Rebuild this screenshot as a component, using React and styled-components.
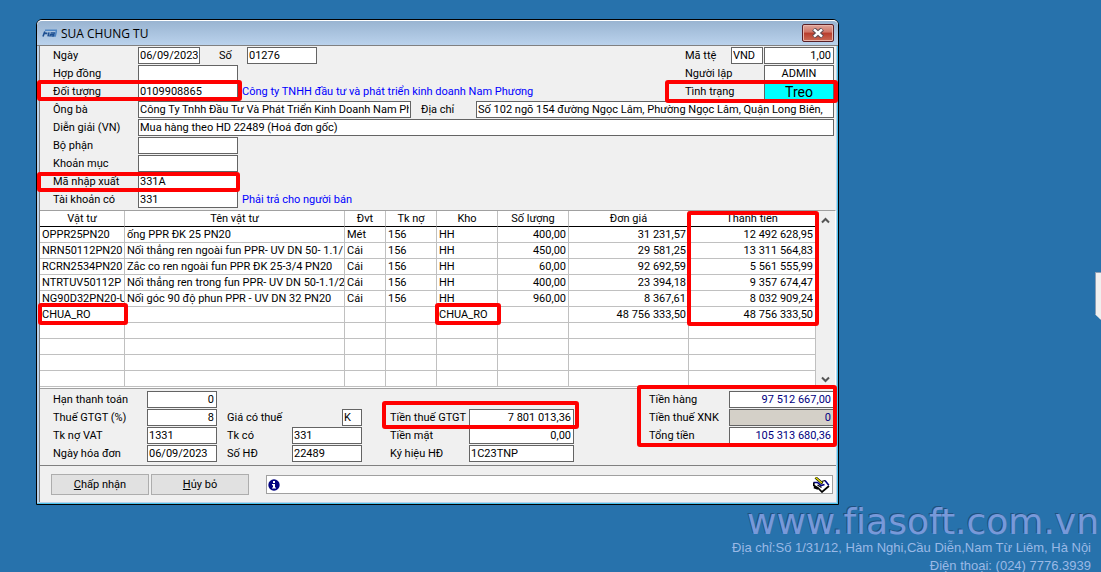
import React from 'react'
import styled, { createGlobalStyle, css } from 'styled-components'

const colors = {
	desktop: '#2772ac',
	face: '#f0f0f0',
	border: '#646464',
	grid: '#c0c0c0',
	link: '#0000ff',
	total: '#000080',
	mark: '#ff0000',
}

// data
const columns = [
	{ title: 'Vật tư', width: 85 },
	{ title: 'Tên vật tư' },
	{ title: 'Đvt', width: 41 },
	{ title: 'Tk nợ', width: 51 },
	{ title: 'Kho', width: 61 },
	{ title: 'Số lượng', width: 71, right: true },
	{ title: 'Đơn giá', width: 120, right: true },
	{ title: 'Thành tiền', width: 127, right: true },
]

const items = [
	['OPPR25PN20', 'ống PPR ĐK 25 PN20', 'Mét', '156', 'HH', '400,00', '31 231,57', '12 492 628,95'],
	['NRN50112PN20', 'Nối thẳng ren ngoài fun PPR- UV DN 50- 1.1/', 'Cái', '156', 'HH', '450,00', '29 581,25', '13 311 564,83'],
	['RCRN2534PN20', 'Zắc co ren ngoài fun PPR ĐK 25-3/4 PN20', 'Cái', '156', 'HH', '60,00', '92 692,59', '5 561 555,99'],
	['NTRTUV50112P', 'Nối thẳng ren trong fun PPR- UV DN 50-1.1/2', 'Cái', '156', 'HH', '400,00', '23 394,18', '9 357 674,47'],
	['NG90D32PN20-U', 'Nối góc 90 độ phun PPR - UV DN 32 PN20', 'Cái', '156', 'HH', '960,00', '8 367,61', '8 032 909,24'],
	['CHUA_RO', '', '', '', 'CHUA_RO', '', '48 756 333,50', '48 756 333,50'],
	...Array(4).fill(Array(8).fill('')),
]

const Field = ({ id, label, labelWidth, value, mark, ...rest }) => (
	<Pair $fill={rest.$fill}>
		<Label htmlFor={id} $width={labelWidth}>
			{label}
		</Label>
		<TextBox id={id} defaultValue={value} {...rest} />
		{mark && <Mark $inset={mark} />}
	</Pair>
)

const LogoIcon = () => (
	<svg width='15' height='9' viewBox='0 0 15 9' aria-hidden='true'>
		<path d='M3 1.2H14.6L13.2 7H10' fill='none' stroke='#4f86c4' strokeWidth='1.6' />
		<path d='M2.8 2.4L1 7.4M2.2 4.4H5.4M7 3.4L6 7.4' fill='none' stroke='#1d4f91' strokeWidth='1.6' />
		<path d='M8.6 3.8H12.4L11.6 6.8H7.8L8.3 5.3H12' fill='none' stroke='#1d4f91' strokeWidth='1.2' />
	</svg>
)

const CloseIcon = () => (
	<svg width='12' height='10' viewBox='0 0 12 10' aria-hidden='true'>
		<path d='M1.6 1L10.4 9M10.4 1L1.6 9' stroke='#5b4a52' strokeWidth='4.4' />
		<path d='M2 1.4L10 8.6M10 1.4L2 8.6' stroke='#fff' strokeWidth='2.6' />
	</svg>
)

const InfoIcon = () => (
	<svg width='12' height='12' viewBox='0 0 12 12' aria-hidden='true'>
		<circle cx='6' cy='6' r='5.7' fill='#000080' />
		<path d='M5 2H7V4H5ZM4 5H7V8.4H8V9.6H4V8.4H5V6.2H4Z' fill='#fff' />
	</svg>
)

const NoteIcon = () => (
	<svg width='17' height='16' viewBox='0 0 17 16' aria-hidden='true'>
		<path d='M5 7L12 3.5L16 9L9 15L3.5 11Z' fill='#fff' />
		<path d='M0.5 5.5H4.5L8 8.5L11.5 7.5M12 3.5L15.8 8.2' fill='none' stroke='#000080' strokeWidth='1.6' />
		<path d='M0.8 5.5V8.5L5 11L9 15L16 9M0.8 10.5L5 12' fill='none' stroke='#000' strokeWidth='1.7' />
		<path d='M8.5 4.5L12 3.5M4.5 8L8.5 10.5' fill='none' stroke='#000' strokeWidth='1.2' />
		<path d='M2.5 0.5L9.5 6.5' stroke='#000' strokeWidth='2.6' />
		<path d='M2.5 0.5L9 6' stroke='#e6e000' strokeWidth='1.4' />
	</svg>
)

const Chevron = ({ down }) => (
	<svg width='9' height='7' viewBox='0 0 9 7' aria-hidden='true'>
		<path d={down ? 'M1 1.5L4.5 5L8 1.5' : 'M1 5.5L4.5 2L8 5.5'} fill='none' stroke='#555' strokeWidth='2' />
	</svg>
)

const App = () => (
	<>
		<GlobalStyle />
		<Desktop>
			<Window aria-label='SUA CHUNG TU'>
				<TitleBar>
					<LogoIcon />
					<Title>SUA CHUNG TU</Title>
					<CloseButton aria-label='Close'>
						<CloseIcon />
					</CloseButton>
				</TitleBar>

				<Body>
					<Header>
						<Row>
							<Field id='date' label='Ngày' value='06/09/2023' $width={62} />
							<Gap $width={19} />
							<Field id='number' label='Số' labelWidth={28} value='01276' $width={70} />
							<Side>
								<Label htmlFor='currency' $width={45}>
									Mã ttệ
								</Label>
								<TextBox id='currency' defaultValue='VND' $width={32} />
								<TextBox aria-label='Tỷ giá' defaultValue='1,00' $width={70} $align='right' />
							</Side>
						</Row>
						<Row>
							<Field id='contract' label='Hợp đồng' value='' $width={100} />
							<Side>
								<Label htmlFor='author' $width={78}>
									Người lập
								</Label>
								<TextBox id='author' defaultValue='ADMIN' $width={70} $align='center' />
							</Side>
						</Row>
						<Row>
							<Field id='partner' label='Đối tượng' value='0109908865' $width={100} mark='-3px -4px -1px -16px' />
							<Hint>Công ty TNHH đầu tư và phát triển kinh doanh Nam Phương</Hint>
							<Side>
								<Label htmlFor='status' $width={78}>
									Tình trạng
								</Label>
								<StatusBox id='status' defaultValue='Treo' $width={70} $align='center' />
								<Mark $inset='-3px -4px -3px -20px' />
							</Side>
						</Row>
						<Row>
							<Field id='person' label='Ông bà' value='Công Ty Tnhh Đầu Tư Và Phát Triển Kinh Doanh Nam Phương' $width={273} />
							<Gap $width={10} />
							<Field id='address' label='Địa chỉ' labelWidth={55} value='Số 102 ngõ 154 đường Ngọc Lâm, Phường Ngọc Lâm, Quận Long Biên,' $fill />
						</Row>
						<Row>
							<Field id='note' label='Diễn giải (VN)' value='Mua hàng theo HD 22489 (Hoá đơn gốc)' $fill />
						</Row>
						<Row>
							<Field id='department' label='Bộ phận' value='' $width={100} />
						</Row>
						<Row>
							<Field id='category' label='Khoản mục' value='' $width={100} />
						</Row>
						<Row>
							<Field id='code' label='Mã nhập xuất' value='331A' $width={100} mark='-1px -2px -2px -16px' />
						</Row>
						<Row>
							<Field id='credit' label='Tài khoản có' value='331' $width={100} />
							<Hint>Phải trả cho người bán</Hint>
						</Row>
					</Header>

					<GridArea>
						<Table>
							<colgroup>
								{columns.map((column) => (
									<Col key={column.title} $width={column.width} />
								))}
							</colgroup>
							<thead>
								<tr>
									{columns.map((column, i) => (
										<HeadCell key={column.title}>
											{column.title}
											{i === 7 && <Mark $inset='0 -4px auto -2px' $height={115} />}
										</HeadCell>
									))}
								</tr>
							</thead>
							<tbody>
								{items.map((item, row) => (
									<tr key={row}>
										{item.map((value, i) => (
											<Cell key={i} $right={columns[i].right}>
												<CellText>{value}</CellText>
												{value === 'CHUA_RO' && <Mark $inset='-4px -4px -3px -2px' />}
											</Cell>
										))}
									</tr>
								))}
							</tbody>
						</Table>
						<ScrollBar>
							<Chevron />
							<Chevron down />
						</ScrollBar>
					</GridArea>

					<Footer>
						<Group>
							<Field id='term' label='Hạn thanh toán' labelWidth={94} value='0' $width={70} $align='right' />
							<Field id='vat' label='Thuế GTGT (%)' labelWidth={94} value='8' $width={70} $align='right' />
							<Field id='vatDebit' label='Tk nợ VAT' labelWidth={94} value='1331' $width={70} />
							<Field id='invoiceDate' label='Ngày hóa đơn' labelWidth={94} value='06/09/2023' $width={70} />
						</Group>
						<Gap $width={10} />
						<Group>
							<Field id='taxed' label='Giá có thuế' labelWidth={115} value='K' $width={20} />
							<Field id='vatCredit' label='Tk có' labelWidth={65} value='331' $width={70} />
							<Field id='invoice' label='Số HĐ' labelWidth={65} value='22489' $width={70} />
						</Group>
						<Gap $width={28} />
						<Group>
							<Field id='tax' label='Tiền thuế GTGT' labelWidth={79} value='7 801 013,36' $width={105} $align='right' mark='-8px -5px -3px -8px' />
							<Field id='cash' label='Tiền mặt' labelWidth={79} value='0,00' $width={105} $align='right' />
							<Field id='symbol' label='Ký hiệu HĐ' labelWidth={79} value='1C23TNP' $width={105} />
						</Group>
						<Totals>
							<Field id='goods' label='Tiền hàng' labelWidth={80} value='97 512 667,00' $width={105} $align='right' $total />
							<Field id='importTax' label='Tiền thuế XNK' labelWidth={80} value='0' $width={105} $align='right' $total $locked readOnly />
							<Field id='sum' label='Tổng tiền' labelWidth={80} value='105 313 680,36' $width={105} $align='right' $total />
							<Mark $inset='-6px -3px -3px -12px' />
						</Totals>
					</Footer>

					<Actions>
						<Button>
							<u>C</u>hấp nhận
						</Button>
						<Button>
							<u>H</u>ủy bỏ
						</Button>
						<Message>
							<InfoIcon />
							<MessageInput aria-label='Thông báo' />
							<NoteIcon />
						</Message>
					</Actions>
				</Body>
			</Window>

			<Contact>
				<Site>www.fiasoft.com.vn</Site>
				<p>Địa chỉ:Số 1/31/12, Hàm Nghi,Cầu Diễn,Nam Từ Liêm, Hà Nội</p>
				<p>Điện thoại: (024) 7776.3939</p>
			</Contact>
			<EdgeTab />
		</Desktop>
	</>
)

const GlobalStyle = createGlobalStyle`
	* {
		box-sizing: border-box;
	}

	body {
		margin: 0;
		background: ${colors.desktop};
		font-family: Roboto, 'Liberation Sans', sans-serif;
		font-size: 11px;
		line-height: 18px;
		color: #000;
	}

	input, button {
		font: inherit;
		color: inherit;
	}

	p {
		margin: 0;
	}
`

const Desktop = styled.main`
	position: relative;
	height: 100vh;
	min-height: 572px;
	padding-top: 19px;
	overflow: hidden;
	background: ${colors.desktop};
`

const Window = styled.section`
	margin: 0 262px 0 36px;
	padding: 0 2px 2px;
	border: 1px solid #000;
	border-radius: 6px 6px 0 0;
	background: #b9d1ea;
	box-shadow: inset 0 1px #fff, inset -1px -1px #4cc4ee;
`

const TitleBar = styled.header`
	display: flex;
	align-items: center;
	gap: 4px;
	height: 26px;
	margin: 0 -2px;
	padding: 0 4px 0 5px;
	border-radius: 5px 5px 0 0;
	border-top: 1px solid #fff;
	border-bottom: 1px solid #808080;
	background: linear-gradient(#99b4d1, #bad2ec);
`

const Title = styled.h1`
	flex: 1;
	margin: 0;
	font: 12px 'Open Sans', 'Noto Sans', sans-serif;
`

const CloseButton = styled.button`
	display: grid;
	place-items: center;
	width: 32px;
	height: 18px;
	padding: 0;
	border: 1px solid #5a1f26;
	border-radius: 2px;
	background: linear-gradient(#e0a59a, #cf7365 45%, #b83c2c 50%, #cc6a55);
	box-shadow: inset 0 0 0 1px #e8b5ab;
`

const Body = styled.div`
	border-left: 1px solid #808080;
	background: ${colors.face};
`

const Header = styled.div`
	display: flex;
	flex-direction: column;
	gap: 1px;
	padding: 1px 2px 2px 13px;
`

const Row = styled.div`
	display: flex;
	height: 17px;
`

const Pair = styled.div`
	position: relative;
	display: flex;
	justify-content: space-between;
	height: 17px;
	${({ $fill }) => $fill && 'flex: 1;'}
`

const Side = styled.div`
	position: relative;
	display: flex;
	gap: 1px;
	margin-left: auto;
`

const Label = styled.label`
	flex: none;
	width: ${({ $width = 85 }) => $width}px;
	white-space: nowrap;
`

const TextBox = styled.input`
	${({ $fill, $width }) => ($fill ? 'flex: 1; min-width: 0;' : `width: ${$width}px;`)}
	height: 17px;
	padding: ${({ $align }) => ($align === 'right' ? '0 2px' : '0 1px')};
	border: 1px solid ${colors.border};
	border-radius: 0;
	background: ${({ $locked }) => ($locked ? '#d4d0c8' : '#fff')};
	text-align: ${({ $align = 'left' }) => $align};
	${({ $total }) => $total && `color: ${colors.total};`}
`

const StatusBox = styled(TextBox)`
	background: #00ffff;
	font-size: 14px;
`

const Hint = styled.span`
	padding-left: 4px;
	color: ${colors.link};
	white-space: nowrap;
`

const Gap = styled.span`
	flex: none;
	width: ${({ $width }) => $width}px;
`

// red frame drawn over a field or a cell
const Mark = styled.span`
	position: absolute;
	z-index: 1;
	inset: ${({ $inset }) => $inset};
	${({ $height }) => $height && `height: ${$height}px;`}
	border: 4px solid ${colors.mark};
	border-radius: 3px;
	pointer-events: none;
`

const GridArea = styled.div`
	display: flex;
	padding-bottom: 1px;
	border: 1px solid #a0a0a0;
	border-left: 0;
	border-right-color: #fff;
	background: #fff;
`

const Table = styled.table`
	flex: 1;
	width: 0;
	table-layout: fixed;
	border-collapse: separate;
	border-spacing: 0;
`

const Col = styled.col`
	${({ $width }) => $width && `width: ${$width}px;`}
`

const cell = css`
	position: relative;
	height: 16px;
	border-right: 1px solid ${colors.grid};
	line-height: 15px;
	white-space: nowrap;
`

const HeadCell = styled.th`
	${cell}
	padding: 0;
	border-bottom: 1px solid #000;
	font-weight: 400;
	text-align: center;
`

const Cell = styled.td`
	${cell}
	padding: ${({ $right }) => ($right ? '0 2px 0 0' : '0 0 0 2px')};
	border-bottom: 1px solid ${colors.grid};
	text-align: ${({ $right }) => ($right ? 'right' : 'left')};
`

const CellText = styled.div`
	height: 15px;
	overflow: hidden;
`

const ScrollBar = styled.div`
	display: flex;
	flex-direction: column;
	align-items: center;
	justify-content: space-between;
	width: 19px;
	padding: 6px 0 4px;
	background: ${colors.face};
`

const Footer = styled.div`
	display: flex;
	align-items: flex-end;
	padding: 2px 2px 3px 13px;
	border-bottom: 1px solid #808080;
`

const Group = styled.div`
	display: flex;
	flex-direction: column;
	gap: 1px;
`

const Totals = styled(Group)`
	position: relative;
	align-self: flex-start;
	margin-left: auto;
`

const Actions = styled.div`
	display: flex;
	align-items: center;
	gap: 2px;
	padding: 8px 3px 7px 11px;
`

const Button = styled.button`
	width: 98px;
	height: 21px;
	padding: 0;
	border: 1px solid #adadad;
	background: #e1e1e1;
`

const Message = styled.div`
	flex: 1;
	display: flex;
	align-items: center;
	height: 19px;
	margin-left: 15px;
	padding: 0 2px 0 1px;
	border: 1px solid #a0a0a0;
	background: #fff;
`

const MessageInput = styled.input`
	flex: 1;
	min-width: 0;
	height: 16px;
	border: 0;
	outline: 0;
	background: none;
`

const Contact = styled.footer`
	padding-right: 10px;
	color: #9ab9e6;
	font: 13px/18px 'Liberation Sans', Arial, sans-serif;
	text-align: right;
`

const Site = styled.div`
	margin-right: -8px;
	color: #7899d9;
	font: 36px/34px 'DejaVu Sans', sans-serif;
	font-variant-ligatures: none;
	text-shadow: -1px -1px #20507f;
`

const EdgeTab = styled.aside`
	position: absolute;
	top: 272px;
	right: 0;
	width: 6px;
	height: 48px;
	border: 1px solid #8d9fb5;
	border-right: 0;
	background: #f0f0f0;
	clip-path: polygon(0 0, 100% 0, 100% 100%, 0 88%);
`

export default App
